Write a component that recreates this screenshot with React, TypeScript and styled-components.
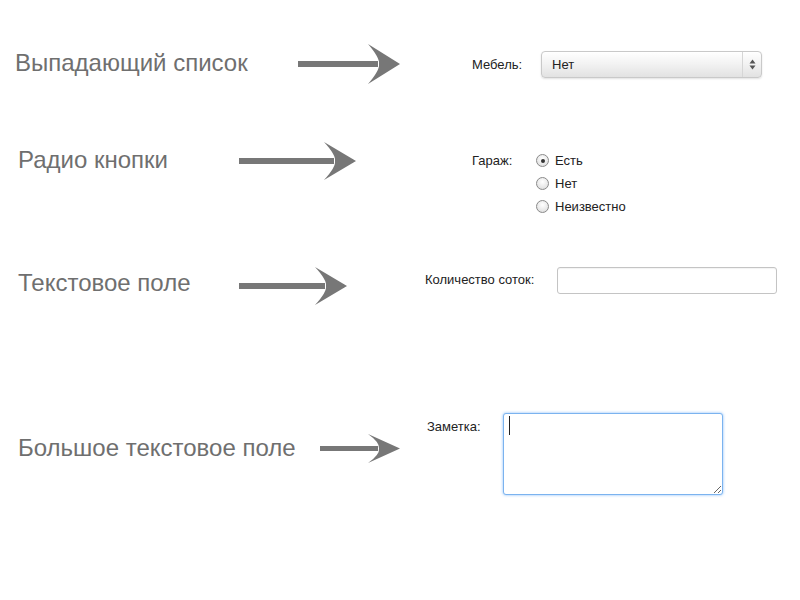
import React from "react"
import styled, { createGlobalStyle } from "styled-components"

const Global = createGlobalStyle`
    body {
        margin: 0;
        background: #fff;
        font-family: "Liberation Sans", Arial, sans-serif;
    }
`

const Page = styled.div`
    width: 800px;
    height: 600px;
    padding-top: 44px;
    box-sizing: border-box;
    overflow: hidden;
`

const Row = styled.div<{ $mt: number }>`
    display: flex;
    align-items: flex-start;
    margin-top: ${(p) => p.$mt}px;
`

const Lead = styled.div<{ $dy?: number; $h: number }>`
    display: flex;
    align-items: center;
    height: ${(p) => p.$h}px;
    margin-top: ${(p) => p.$dy ?? 0}px;
    flex: none;
`

const Caption = styled.div<{ $left: number; $w: number; $dy?: number }>`
    width: ${(p) => p.$w}px;
    margin-left: ${(p) => p.$left}px;
    margin-top: ${(p) => p.$dy ?? 0}px;
    font-size: 24px;
    color: #6f6f6f;
    white-space: nowrap;
`

const Field = styled.div<{ $left: number; $dy?: number }>`
    display: flex;
    align-items: flex-start;
    margin-left: ${(p) => p.$left}px;
    margin-top: ${(p) => p.$dy ?? 0}px;
    font-size: 13px;
    color: #222;
`

const Label = styled.div<{ $w: number; $lh?: number; $pt?: number }>`
    width: ${(p) => p.$w}px;
    line-height: ${(p) => p.$lh ?? 26}px;
    padding-top: ${(p) => p.$pt ?? 0}px;
    flex: none;
    white-space: nowrap;
`

const SelectBox = styled.div`
    width: 221px;
    height: 27px;
    box-sizing: border-box;
    border: 1px solid #c9c9c9;
    border-radius: 4px;
    background: linear-gradient(#ffffff, #f3f3f3 45%, #e2e2e2);
    box-shadow: 0 1px 2px rgba(0, 0, 0, 0.12), inset 0 1px 0 #fff;
    display: flex;
    align-items: center;
    padding-left: 10px;
`

const SelectValue = styled.span`
    flex: 1;
`

const SelectHandle = styled.div`
    width: 18px;
    height: 100%;
    border-left: 1px solid #d6d6d6;
    display: flex;
    align-items: center;
    justify-content: center;
`

const RadioList = styled.div`
    display: flex;
    flex-direction: column;
`

const RadioRow = styled.label`
    display: flex;
    align-items: center;
    height: 23px;
    gap: 6px;
`

const Radio = styled.input`
    appearance: none;
    margin: 0;
    width: 13px;
    height: 13px;
    border-radius: 50%;
    border: 1px solid #8a8a8a;
    background: radial-gradient(circle at 50% 35%, #ffffff, #e4e4e4 70%, #d0d0d0);
    box-sizing: border-box;
    position: relative;

    &:checked::after {
        content: "";
        position: absolute;
        left: 3.5px;
        top: 3.5px;
        width: 4px;
        height: 4px;
        border-radius: 50%;
        background: #333;
    }
`

const TextInput = styled.input`
    width: 220px;
    height: 27px;
    box-sizing: border-box;
    border: 1px solid #c4c4c4;
    border-radius: 3px;
    box-shadow: inset 0 1px 1px rgba(0, 0, 0, 0.05);
    outline: none;
    font: inherit;
`

const AreaWrap = styled.div`
    position: relative;
`

const TextArea = styled.textarea`
    display: block;
    width: 220px;
    height: 82px;
    box-sizing: border-box;
    border: 1px solid #7bb3ef;
    border-radius: 3px;
    box-shadow: 0 0 3px rgba(82, 160, 245, 0.7);
    outline: none;
    resize: both;
    font: inherit;
`

const Caret = styled.span`
    position: absolute;
    left: 6px;
    top: 3px;
    width: 1px;
    height: 19px;
    background: #222;
`

function Arrow({ w, h, t = 6 }: { w: number; h: number; t?: number }) {
    const c = h / 2
    const head = 32
    return (
        <svg width={w} height={h} viewBox={`0 0 ${w} ${h}`} style={{ flex: "none" }}>
            <rect x={0} y={c - t / 2} width={w - head + 10} height={t} fill="#777" />
            <path
                d={`M ${w} ${c} L ${w - head} 0 Q ${w - head + 12} ${c - 6} ${w - head + 11} ${c} Q ${w - head + 12} ${c + 6} ${w - head} ${h} Z`}
                fill="#777"
            />
        </svg>
    )
}

function SortIcon() {
    return (
        <svg width="7" height="11" viewBox="0 0 7 11">
            <path d="M3.5 0.5 L6.5 4.5 L0.5 4.5 Z" fill="#555" />
            <path d="M3.5 10.5 L6.5 6.5 L0.5 6.5 Z" fill="#555" />
        </svg>
    )
}

export default function App() {
    return (
        <>
            <Global />
            <Page>
                <Row $mt={0}>
                    <Lead $h={40}>
                        <Caption $left={15} $w={283} $dy={-2}>
                            Выпадающий список
                        </Caption>
                        <Arrow w={102} h={40} />
                    </Lead>
                    <Field $left={72} $dy={7}>
                        <Label $w={69} $lh={27}>
                            Мебель:
                        </Label>
                        <SelectBox>
                            <SelectValue>Нет</SelectValue>
                            <SelectHandle>
                                <SortIcon />
                            </SelectHandle>
                        </SelectBox>
                    </Field>
                </Row>

                <Row $mt={58}>
                    <Lead $h={38}>
                        <Caption $left={18} $w={221} $dy={-2}>
                            Радио кнопки
                        </Caption>
                        <Arrow w={117} h={38} />
                    </Lead>
                    <Field $left={116} $dy={7}>
                        <Label $w={64} $lh={23}>
                            Гараж:
                        </Label>
                        <RadioList>
                            <RadioRow>
                                <Radio type="radio" name="garage" defaultChecked />
                                Есть
                            </RadioRow>
                            <RadioRow>
                                <Radio type="radio" name="garage" />
                                Нет
                            </RadioRow>
                            <RadioRow>
                                <Radio type="radio" name="garage" />
                                Неизвестно
                            </RadioRow>
                        </RadioList>
                    </Field>
                </Row>

                <Row $mt={49}>
                    <Lead $h={38}>
                        <Caption $left={18} $w={221} $dy={-6}>
                            Текстовое поле
                        </Caption>
                        <Arrow w={108} h={38} />
                    </Lead>
                    <Field $left={78} $dy={0}>
                        <Label $w={132}>Количество соток:</Label>
                        <TextInput type="text" />
                    </Field>
                </Row>

                <Row $mt={108}>
                    <Lead $h={29} $dy={21}>
                        <Caption $left={18} $w={302} $dy={-2}>
                            Большое текстовое поле
                        </Caption>
                        <Arrow w={80} h={29} t={5} />
                    </Lead>
                    <Field $left={27} $dy={0}>
                        <Label $w={76} $lh={16} $pt={6}>
                            Заметка:
                        </Label>
                        <AreaWrap>
                            <TextArea />
                            <Caret />
                        </AreaWrap>
                    </Field>
                </Row>
            </Page>
        </>
    )
}
